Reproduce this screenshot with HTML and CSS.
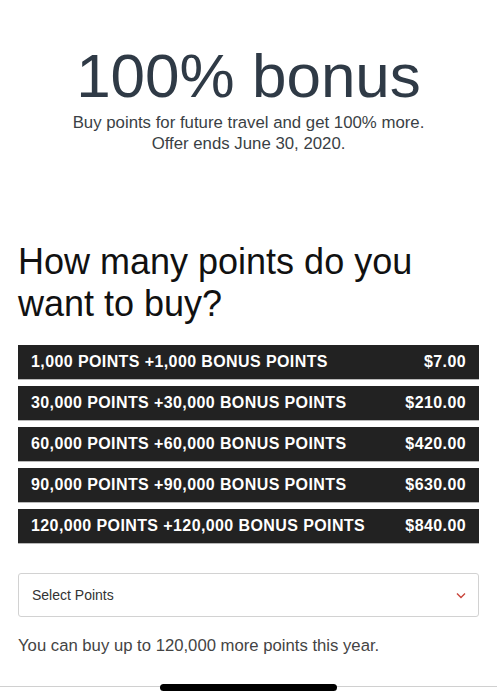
FILE: index.html
```html
<!DOCTYPE html>
<html lang="en">
<head>
<meta charset="utf-8">
<title>100% bonus</title>
<link rel="stylesheet" href="styles.css">
</head>
<body>
<main class="page">
  <header class="hero">
    <h1 class="hero-title">100% bonus</h1>
    <p class="hero-sub">Buy points for future travel and get 100% more.<br>Offer ends June 30, 2020.</p>
  </header>
  <section class="buy">
    <h2 class="buy-title">How many points do you want to buy?</h2>
    <ul class="options">
      <li class="option"><span>1,000 POINTS +1,000 BONUS POINTS</span><span>$7.00</span></li>
      <li class="option"><span>30,000 POINTS +30,000 BONUS POINTS</span><span>$210.00</span></li>
      <li class="option"><span>60,000 POINTS +60,000 BONUS POINTS</span><span>$420.00</span></li>
      <li class="option"><span>90,000 POINTS +90,000 BONUS POINTS</span><span>$630.00</span></li>
      <li class="option"><span>120,000 POINTS +120,000 BONUS POINTS</span><span>$840.00</span></li>
    </ul>
    <div class="select">
      <span>Select Points</span>
      <svg class="chev" width="10" height="7" viewBox="0 0 10 7"><polyline points="1,1.5 5,5.5 9,1.5" fill="none" stroke="#c9453b" stroke-width="1.4"/></svg>
    </div>
    <p class="note">You can buy up to 120,000 more points this year.</p>
  </section>
  <footer class="home"><span class="pill"></span></footer>
</main>
</body>
</html>
```
FILE: styles.css
```css
* { box-sizing: border-box; }
html, body { margin: 0; padding: 0; background: #fff; }
body { font-family: "Liberation Sans", Arial, sans-serif; width: 497px; height: 700px; overflow: hidden; }
.page { display: flex; flex-direction: column; height: 700px; }
.hero { padding-top: 41px; text-align: center; }
.hero-title { margin: 0; font-size: 62px; line-height: 70px; font-weight: 400; color: #2f3a46; }
.hero-sub { margin: 1px 0 0; font-size: 16.8px; line-height: 21px; color: #3a3f45; }
.buy { padding: 0 18px; }
.buy-title { margin: 87px 0 0; font-size: 36px; line-height: 42px; font-weight: 400; color: #111; }
.options { list-style: none; margin: 20px 0 0; padding: 0; display: flex; flex-direction: column; gap: 6px; }
.option { display: flex; justify-content: space-between; height: 35px; line-height: 34px; padding: 0 13px; background: #222; border-bottom: 1px solid #b8b8b8; color: #fff; font-weight: 700; font-size: 16px; letter-spacing: 0.4px; }
.select { margin-top: 29px; height: 44px; border: 1px solid #d2d2d2; border-radius: 3px; display: flex; align-items: center; justify-content: space-between; padding: 0 12px 0 13px; font-size: 14px; color: #333; }
.chev { display: block; }
.note { margin: 18px 0 0; font-size: 16.7px; line-height: 21px; color: #444; }
.home { margin-top: auto; height: 24px; margin-bottom: 1px; display: flex; justify-content: center; align-items: center; background: linear-gradient(#fff 0, #fff 11px, #d0d0d0 11px, #d0d0d0 12px, #fff 12px); }
.pill { width: 177px; height: 7px; border-radius: 4px; background: #000; }
```
